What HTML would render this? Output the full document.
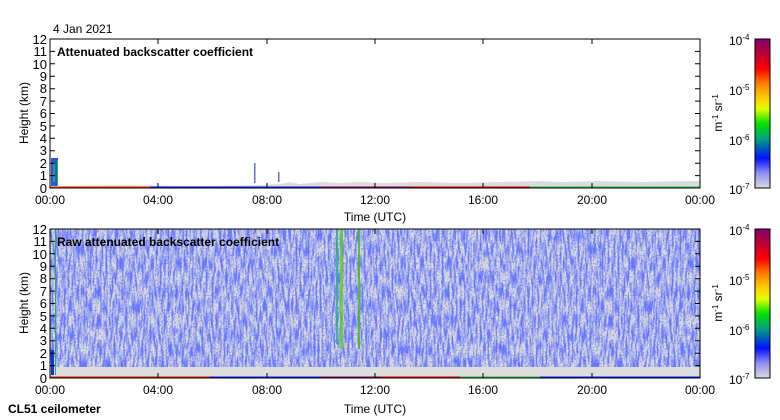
<!DOCTYPE html>
<html><head><style>
html,body{margin:0;padding:0;background:#fff;}
svg{display:block;font-family:"Liberation Sans",sans-serif;}
</style></head><body>
<svg width="780" height="420" viewBox="0 0 780 420" xmlns="http://www.w3.org/2000/svg">
<defs>
<filter id="nz" x="0" y="0" width="100%" height="100%">
<feTurbulence type="fractalNoise" baseFrequency="0.5 0.07" numOctaves="2" seed="5"/>
<feColorMatrix type="matrix" values="0 0 0 0 0.15  0 0 0 0 0.2  0 0 0 0 1  3.2 0 0 0 -1.2"/>
</filter>
<filter id="nz2" x="0" y="0" width="100%" height="100%">
<feTurbulence type="fractalNoise" baseFrequency="0.6 0.6" numOctaves="1" seed="9"/>
<feColorMatrix type="matrix" values="0 0 0 0 0.05  0 0 0 0 0.1  0 0 0 0 1  4 0 0 0 -1.9"/>
</filter>
<linearGradient id="cb" x1="0" y1="0" x2="0" y2="1">
<stop offset="0" stop-color="#800070"/>
<stop offset="0.1" stop-color="#c00030"/>
<stop offset="0.2" stop-color="#ff0000"/>
<stop offset="0.3" stop-color="#ff8000"/>
<stop offset="0.4" stop-color="#ffd000"/>
<stop offset="0.47" stop-color="#e0ff00"/>
<stop offset="0.57" stop-color="#00e000"/>
<stop offset="0.67" stop-color="#00a080"/>
<stop offset="0.8" stop-color="#0010ff"/>
<stop offset="0.9" stop-color="#9090f0"/>
<stop offset="1" stop-color="#d8d8e0"/>
</linearGradient>
</defs>

<text x="53" y="33" font-size="12">4 Jan 2021</text>

<!-- TOP PLOT -->
<rect x="50" y="39" width="650" height="149" fill="#fff"/>
<path d="M60 188 L60 186 L120 185 L200 186 L260 185 L280 184 L290 182 L300 184 L320 182 L340 183 L360 182 L380 183 L420 182 L460 183 L500 182 L540 181 L560 182 L600 181 L640 182 L680 181 L700 181 L700 188 Z" fill="#dcdcdc"/>
<rect x="51" y="158" width="7" height="28" fill="#3050e0"/>
<rect x="53" y="162" width="2" height="20" fill="#30c060" opacity="0.7"/>
<rect x="57" y="160" width="1" height="26" fill="#00d000"/>
<rect x="254" y="163" width="1.5" height="20" fill="#6070e0"/>
<rect x="278" y="172" width="1.5" height="10" fill="#6070e0"/>
<rect x="50" y="186.5" width="650" height="1.5" fill="#0020ff"/>
<rect x="50" y="186.5" width="100" height="1" fill="#ff3000"/>
<rect x="320" y="186.5" width="90" height="1" fill="#800060"/>
<rect x="410" y="186.5" width="120" height="1" fill="#e00000"/>
<rect x="530" y="186.5" width="170" height="1" fill="#20c040"/>
<rect x="50" y="39" width="650" height="149" fill="none" stroke="#000" stroke-width="1"/>
<text x="57" y="56" font-size="12" font-weight="bold">Attenuated backscatter coefficient</text>

<!-- BOTTOM PLOT -->
<rect x="50" y="229" width="650" height="149" fill="#dcdcdc"/>
<rect x="50" y="229" width="650" height="138" filter="url(#nz)"/>
<rect x="50" y="229" width="650" height="138" filter="url(#nz2)" opacity="0.5"/>
<rect x="336" y="229" width="2" height="115" fill="#20b080" opacity="0.8"/>
<rect x="340" y="229" width="3" height="120" fill="#60d000" opacity="0.75"/>
<rect x="358" y="229" width="2" height="120" fill="#40c000" opacity="0.8"/>
<rect x="51" y="350" width="3" height="25" fill="#1030e0"/>
<rect x="55" y="229" width="1" height="146" fill="#20b060"/>
<rect x="50" y="376.5" width="650" height="1.5" fill="#0020ff"/>
<rect x="50" y="376.5" width="160" height="1" fill="#e02000"/>
<rect x="320" y="376.5" width="60" height="1" fill="#800060"/>
<rect x="380" y="376.5" width="80" height="1" fill="#e00000"/>
<rect x="460" y="376.5" width="80" height="1" fill="#30c040"/>
<rect x="50" y="229" width="650" height="149" fill="none" stroke="#000" stroke-width="1"/>
<text x="57" y="246" font-size="12" font-weight="bold">Raw attenuated backscatter coefficient</text>

<g stroke="#000" stroke-width="1">
<path d="M50 51.4h5M50 63.8h5M50 76.2h5M50 88.7h5M50 101.1h5M50 113.5h5M50 125.9h5M50 138.3h5M50 150.8h5M50 163.2h5M50 175.6h5
M695 51.4h5M695 63.8h5M695 76.2h5M695 88.7h5M695 101.1h5M695 113.5h5M695 125.9h5M695 138.3h5M695 150.8h5M695 163.2h5M695 175.6h5
M158 39v5M267 39v5M375 39v5M483 39v5M592 39v5M158 188v-5M267 188v-5M375 188v-5M483 188v-5M592 188v-5"/>
<path transform="translate(0,190)" d="M50 51.4h5M50 63.8h5M50 76.2h5M50 88.7h5M50 101.1h5M50 113.5h5M50 125.9h5M50 138.3h5M50 150.8h5M50 163.2h5M50 175.6h5
M695 51.4h5M695 63.8h5M695 76.2h5M695 88.7h5M695 101.1h5M695 113.5h5M695 125.9h5M695 138.3h5M695 150.8h5M695 163.2h5M695 175.6h5
M158 39v5M267 39v5M375 39v5M483 39v5M592 39v5M158 188v-5M267 188v-5M375 188v-5M483 188v-5M592 188v-5"/>
</g>
<g font-size="13" text-anchor="end">
<text x="47" y="44">12</text><text x="47" y="56">11</text><text x="47" y="69">10</text><text x="47" y="81">9</text><text x="47" y="93">8</text><text x="47" y="106">7</text><text x="47" y="118">6</text><text x="47" y="131">5</text><text x="47" y="143">4</text><text x="47" y="155">3</text><text x="47" y="168">2</text><text x="47" y="180">1</text><text x="47" y="193">0</text>
</g>
<g font-size="13" text-anchor="end" transform="translate(0,190)">
<text x="47" y="44">12</text><text x="47" y="56">11</text><text x="47" y="69">10</text><text x="47" y="81">9</text><text x="47" y="93">8</text><text x="47" y="106">7</text><text x="47" y="118">6</text><text x="47" y="131">5</text><text x="47" y="143">4</text><text x="47" y="155">3</text><text x="47" y="168">2</text><text x="47" y="180">1</text><text x="47" y="193">0</text>
</g>
<g font-size="12" text-anchor="middle">
<text x="50" y="204">00:00</text><text x="158" y="204">04:00</text><text x="267" y="204">08:00</text><text x="375" y="204">12:00</text><text x="483" y="204">16:00</text><text x="592" y="204">20:00</text><text x="700" y="204">00:00</text>
<text x="375" y="221">Time (UTC)</text>
</g>
<g font-size="12" text-anchor="middle" transform="translate(0,190)">
<text x="50" y="204">00:00</text><text x="158" y="204">04:00</text><text x="267" y="204">08:00</text><text x="375" y="204">12:00</text><text x="483" y="204">16:00</text><text x="592" y="204">20:00</text><text x="700" y="204">00:00</text>
<text x="375" y="223">Time (UTC)</text>
</g>
<text transform="translate(28,113) rotate(-90)" font-size="12" text-anchor="middle">Height (km)</text>
<text transform="translate(28,303) rotate(-90)" font-size="12" text-anchor="middle">Height (km)</text>
<text x="8" y="413" font-size="12" font-weight="bold">CL51 ceilometer</text>

<g>
<rect x="755" y="39" width="15" height="149" fill="url(#cb)" stroke="#000"/>
<rect x="755" y="229" width="15" height="149" fill="url(#cb)" stroke="#000"/>
<g font-size="12">
<text x="729" y="45">10<tspan font-size="8" dy="-5">-4</tspan></text>
<text x="729" y="95">10<tspan font-size="8" dy="-5">-5</tspan></text>
<text x="729" y="145">10<tspan font-size="8" dy="-5">-6</tspan></text>
<text x="729" y="194">10<tspan font-size="8" dy="-5">-7</tspan></text>
<text x="729" y="235">10<tspan font-size="8" dy="-5">-4</tspan></text>
<text x="729" y="285">10<tspan font-size="8" dy="-5">-5</tspan></text>
<text x="729" y="335">10<tspan font-size="8" dy="-5">-6</tspan></text>
<text x="729" y="384">10<tspan font-size="8" dy="-5">-7</tspan></text>
</g>
<text transform="translate(722,113) rotate(-90)" font-size="12" text-anchor="middle">m<tspan font-size="8" dy="-4">-1</tspan><tspan dy="4"> sr</tspan><tspan font-size="8" dy="-4">-1</tspan></text>
<text transform="translate(722,303) rotate(-90)" font-size="12" text-anchor="middle">m<tspan font-size="8" dy="-4">-1</tspan><tspan dy="4"> sr</tspan><tspan font-size="8" dy="-4">-1</tspan></text>
</g>
</svg>
</body></html>
